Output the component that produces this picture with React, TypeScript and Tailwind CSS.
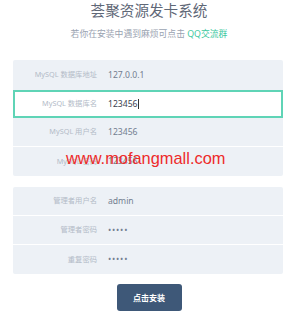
import React from "react";

const font = { fontFamily: '"Noto Sans", "Noto Sans CJK SC", sans-serif' };

function Row({ label, value, last, h = "h-[29px]", dots }: { label: string; value: string; last?: boolean; h?: string; dots?: boolean }) {
  return (
    <div className={`flex items-center ${h} ${last ? "" : "border-b border-white"}`}>
      <div className="w-[84px] text-right text-[7.3px] text-[#b3bbc7] leading-none">{label}</div>
      <div className={`ml-[11px] flex items-center text-[8.6px] leading-none text-[#737e90] ${dots ? "tracking-[0.8px]" : ""}`}>
        {value}
      </div>
    </div>
  );
}

export default function App() {
  return (
    <div className="relative w-[298px] h-[320px] bg-white overflow-hidden" style={font}>
      <div className="h-[20px] pt-[1px] text-center text-[14.6px] leading-[18px] text-[#5f6877]">荟聚资源发卡系统</div>
      <div className="mt-[7px] h-[14px] text-center text-[8.8px] leading-[14px] text-[#9aa3b1]">
        若你在安装中遇到麻烦可点击 <span className="text-[#3cc8a0]">QQ交流群</span>
      </div>

      <div className="mx-[13px] mt-[19px] w-[270px] rounded-[2px] bg-[#edf1f6]">
        <Row label="MySQL 数据库地址" value="127.0.0.1" h="h-[30px]" last />
        <div className="flex items-center h-[28px] bg-white border-2 border-[#5fd4b6]">
          <div className="w-[82px] text-right text-[7.3px] text-[#b3bbc7] leading-none">MySQL 数据库名</div>
          <div className="ml-[11px] flex items-center text-[8.6px] leading-none text-[#3b4250]">
            123456
            <span className="ml-[0.5px] inline-block w-[1px] h-[10px] bg-[#333]" />
          </div>
        </div>
        <Row label="MySQL 用户名" value="123456" />
        <Row label="MySQL 密码" value="123456" last />
      </div>

      <div className="mx-[13px] mt-[11px] w-[270px] rounded-[2px] bg-[#edf1f6]">
        <Row label="管理者用户名" value="admin" />
        <Row label="管理者密码" value="•••••" dots />
        <Row label="重复密码" value="•••••" dots last />
      </div>

      <div className="mt-[10px] flex justify-center">
        <button className="w-[65px] h-[27px] rounded-[3px] bg-[#3e5878] text-white text-[8px] font-bold leading-none">
          点击安装
        </button>
      </div>

      <div
        className="absolute left-[66px] top-[149px] text-[16.4px] leading-[18px] text-[#ee2a2a]"
        style={{ fontFamily: '"Liberation Sans", Arial, sans-serif' }}
      >
        www.mofangmall.com
      </div>
    </div>
  );
}
